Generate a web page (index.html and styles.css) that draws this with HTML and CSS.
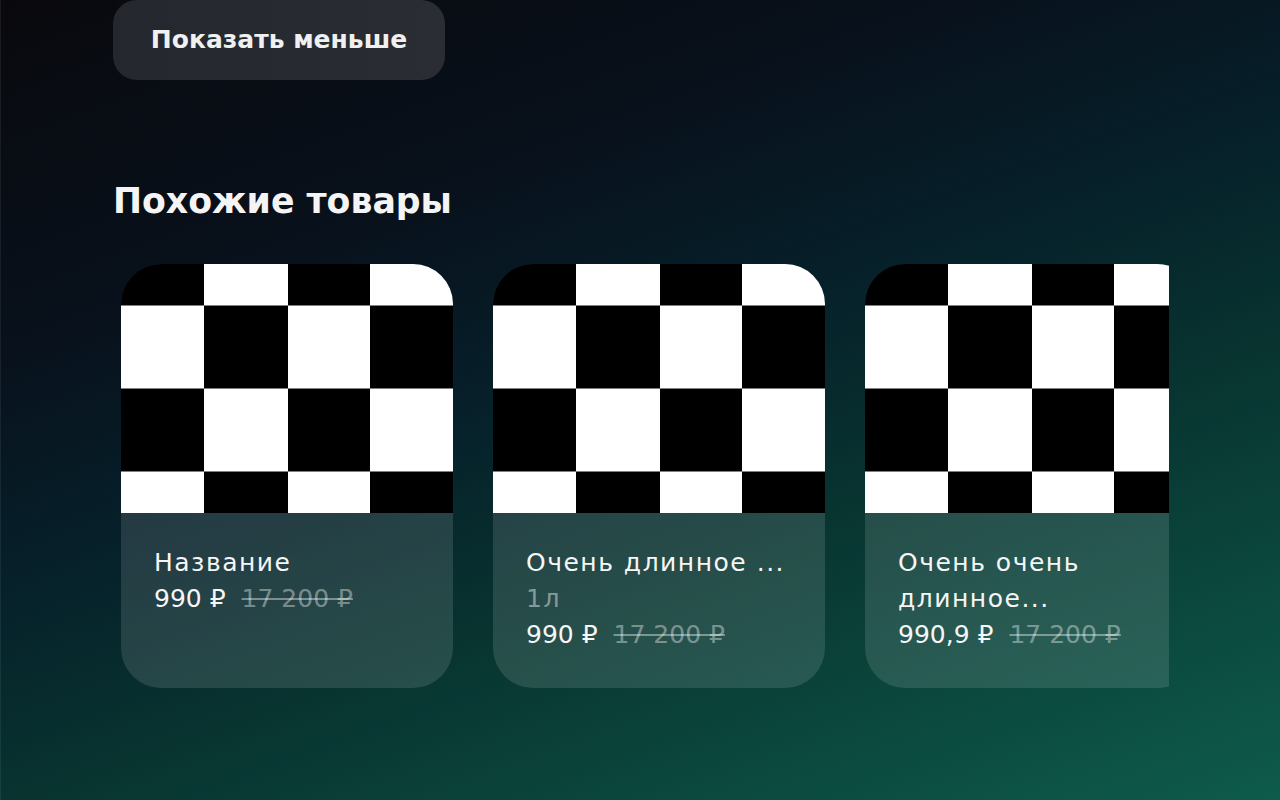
FILE: index.html
```html
<!DOCTYPE html>
<html lang="ru">
<head>
<meta charset="utf-8">
<title>Похожие товары</title>
<link rel="stylesheet" href="styles.css">
</head>
<body>
<main class="page">
  <button class="btn-less">Показать меньше</button>
  <h2 class="section-title">Похожие товары</h2>
  <div class="carousel">
    <div class="track">
      <article class="card">
        <div class="card-img"></div>
        <div class="card-body">
          <div class="card-title">Название</div>
          <div class="card-price"><span class="now">990 ₽</span><s class="old">17 200 ₽</s></div>
        </div>
      </article>
      <article class="card">
        <div class="card-img"></div>
        <div class="card-body">
          <div class="card-title">Очень длинное ...</div>
          <div class="card-volume">1л</div>
          <div class="card-price"><span class="now">990 ₽</span><s class="old">17 200 ₽</s></div>
        </div>
      </article>
      <article class="card">
        <div class="card-img"></div>
        <div class="card-body">
          <div class="card-title">Очень очень<br>длинное...</div>
          <div class="card-price"><span class="now">990,9 ₽</span><s class="old">17 200 ₽</s></div>
        </div>
      </article>
    </div>
  </div>
</main>
</body>
</html>
```
FILE: styles.css
```css
html, body {
  margin: 0;
  padding: 0;
  height: 100%;
}
body {
  background: linear-gradient(160deg, #09090d 0%, #08111c 28%, #06202a 46%, #083430 64%, #0e5b4b 100%);
  border-left: 1px solid rgba(255,255,255,0.07);
  font-family: "DejaVu Sans", "Noto Sans", sans-serif;
  color: #f4f4f4;
  overflow: hidden;
  box-sizing: border-box;
}
.page {
  padding-left: 112px;
  display: flex;
  flex-direction: column;
  align-items: flex-start;
}
.btn-less {
  height: 80px;
  width: 332px;
  border: none;
  border-radius: 24px;
  background: linear-gradient(90deg, #24272d, #2a2d33);
  color: #f0f0f0;
  font-family: inherit;
  font-size: 25px;
  font-weight: 700;
  padding: 0 0 2px;
}
.section-title {
  margin: 100px 0 0;
  font-size: 34.7px;
  line-height: 42px;
  font-weight: 700;
  color: #f4f4f4;
}
.carousel {
  margin: 42px 0 0 8px;
  width: 1048px;
  overflow: hidden;
}
.track {
  display: flex;
  gap: 40px;
}
.card {
  flex: 0 0 332px;
  height: 424px;
  border-radius: 40px;
  overflow: hidden;
  background: rgba(255,255,255,0.12);
  display: flex;
  flex-direction: column;
}
.card-img {
  height: 249px;
  background-image: conic-gradient(#fff 0 25%, #000 0 50%, #fff 0 75%, #000 0);
  background-size: 166px 166px;
  background-position: 0 -41.5px;
}
.card-body {
  padding: 32px 33px 0;
  font-size: 25px;
  line-height: 36px;
  letter-spacing: 1.5px;
}
.card-title {
  color: #f6f6f6;
}
.card-volume {
  color: rgba(255,255,255,0.45);
}
.card-price {
  display: flex;
  gap: 16px;
  letter-spacing: 0;
}
.now {
  color: #f6f6f6;
}
.old {
  color: rgba(255,255,255,0.4);
}
```
